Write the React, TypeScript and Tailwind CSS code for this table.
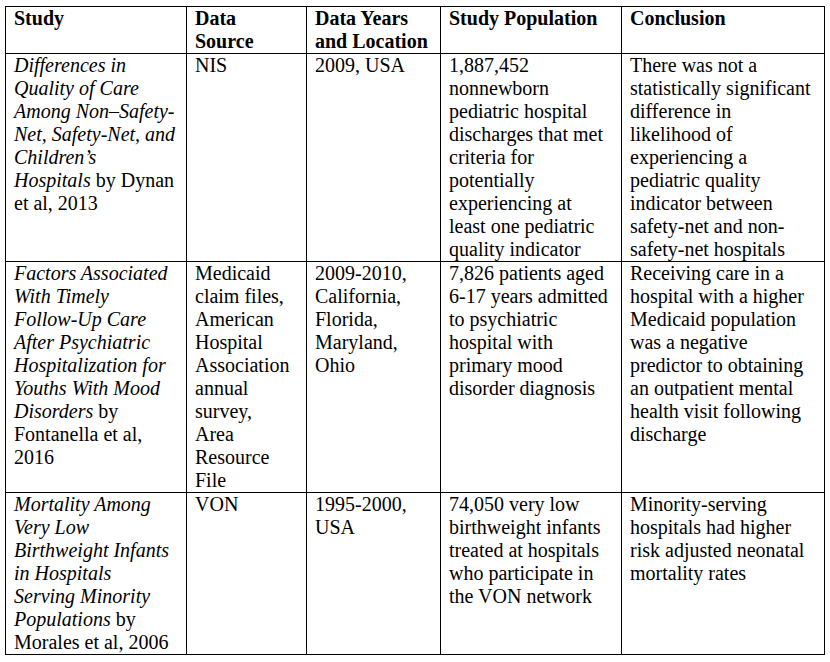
import React from 'react';

const cell = 'border border-black align-top pl-[8px] pr-[2px] py-0 whitespace-nowrap';

const Lines: React.FC<{ lines: React.ReactNode[] }> = ({ lines }) => (
  <>
    {lines.map((l, i) => (
      <div key={i}>{l}</div>
    ))}
  </>
);

const App: React.FC = () => {
  return (
    <div className="min-h-screen bg-white pt-[6px] pl-[5px] font-['Liberation_Serif','Times_New_Roman',serif]">
      <table className="table-fixed border-collapse text-black text-[20px] leading-[23px] w-[819px]">
        <colgroup>
          <col className="w-[181px]" />
          <col className="w-[120px]" />
          <col className="w-[134px]" />
          <col className="w-[181px]" />
          <col className="w-[203px]" />
        </colgroup>
        <thead>
          <tr className="font-bold text-left">
            <th className={cell}><Lines lines={['Study']} /></th>
            <th className={cell}><Lines lines={['Data', 'Source']} /></th>
            <th className={cell}><Lines lines={['Data Years', 'and Location']} /></th>
            <th className={cell}><Lines lines={['Study Population']} /></th>
            <th className={cell}><Lines lines={['Conclusion']} /></th>
          </tr>
        </thead>
        <tbody>
          <tr>
            <td className={cell}>
              <Lines
                lines={[
                  <i>Differences in</i>,
                  <i>Quality of Care</i>,
                  <i>Among Non–Safety-</i>,
                  <i>Net, Safety-Net, and</i>,
                  <i>Children’s</i>,
                  <><i>Hospitals</i> by Dynan</>,
                  'et al, 2013',
                ]}
              />
            </td>
            <td className={cell}>NIS</td>
            <td className={cell}>2009, USA</td>
            <td className={cell}>
              <Lines
                lines={[
                  '1,887,452',
                  'nonnewborn',
                  'pediatric hospital',
                  'discharges that met',
                  'criteria for',
                  'potentially',
                  'experiencing at',
                  'least one pediatric',
                  'quality indicator',
                ]}
              />
            </td>
            <td className={cell}>
              <Lines
                lines={[
                  'There was not a',
                  'statistically significant',
                  'difference in',
                  'likelihood of',
                  'experiencing a',
                  'pediatric quality',
                  'indicator between',
                  'safety-net and non-',
                  'safety-net hospitals',
                ]}
              />
            </td>
          </tr>
          <tr>
            <td className={cell}>
              <Lines
                lines={[
                  <i>Factors Associated</i>,
                  <i>With Timely</i>,
                  <i>Follow-Up Care</i>,
                  <i>After Psychiatric</i>,
                  <i>Hospitalization for</i>,
                  <i>Youths With Mood</i>,
                  <><i>Disorders</i> by</>,
                  'Fontanella et al,',
                  '2016',
                ]}
              />
            </td>
            <td className={cell}>
              <Lines
                lines={[
                  'Medicaid',
                  'claim files,',
                  'American',
                  'Hospital',
                  'Association',
                  'annual',
                  'survey,',
                  'Area',
                  'Resource',
                  'File',
                ]}
              />
            </td>
            <td className={cell}>
              <Lines lines={['2009-2010,', 'California,', 'Florida,', 'Maryland,', 'Ohio']} />
            </td>
            <td className={cell}>
              <Lines
                lines={[
                  '7,826 patients aged',
                  '6-17 years admitted',
                  'to psychiatric',
                  'hospital with',
                  'primary mood',
                  'disorder diagnosis',
                ]}
              />
            </td>
            <td className={cell}>
              <Lines
                lines={[
                  'Receiving care in a',
                  'hospital with a higher',
                  'Medicaid population',
                  'was a negative',
                  'predictor to obtaining',
                  'an outpatient mental',
                  'health visit following',
                  'discharge',
                ]}
              />
            </td>
          </tr>
          <tr>
            <td className={cell}>
              <Lines
                lines={[
                  <i>Mortality Among</i>,
                  <i>Very Low</i>,
                  <i>Birthweight Infants</i>,
                  <i>in Hospitals</i>,
                  <i>Serving Minority</i>,
                  <><i>Populations</i> by</>,
                  'Morales et al, 2006',
                ]}
              />
            </td>
            <td className={cell}>VON</td>
            <td className={cell}>
              <Lines lines={['1995-2000,', 'USA']} />
            </td>
            <td className={cell}>
              <Lines
                lines={[
                  '74,050 very low',
                  'birthweight infants',
                  'treated at hospitals',
                  'who participate in',
                  'the VON network',
                ]}
              />
            </td>
            <td className={cell}>
              <Lines
                lines={[
                  'Minority-serving',
                  'hospitals had higher',
                  'risk adjusted neonatal',
                  'mortality rates',
                ]}
              />
            </td>
          </tr>
        </tbody>
      </table>
    </div>
  );
};

export default App;
